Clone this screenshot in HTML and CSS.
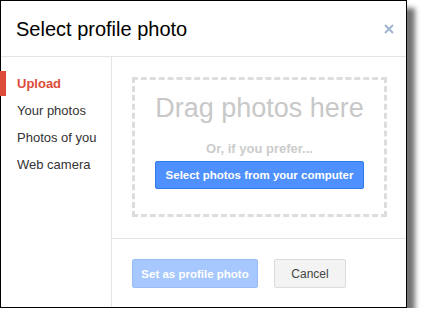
FILE: index.html
```html
<!doctype html>
<html lang="en">
  <head>
    <meta charset="UTF-8" />
    <meta name="viewport" content="width=device-width, initial-scale=1.0" />
    <title>Select profile photo</title>
    <link rel="stylesheet" href="styles.css">
  </head>
  <body>
    <div class="dialog">
      <div class="dialog-header">
        <h1 class="dialog-title">Select profile photo</h1>
        <span class="close" title="Close">
          <svg width="10" height="10" viewBox="0 0 10 10">
            <path d="M1 1 L9 9 M9 1 L1 9" stroke="#a0b4cf" stroke-width="2" fill="none" />
          </svg>
        </span>
      </div>

      <div class="dialog-body">
        <ul class="nav">
          <li class="nav-item active">Upload</li>
          <li class="nav-item">Your photos</li>
          <li class="nav-item">Photos of you</li>
          <li class="nav-item">Web camera</li>
        </ul>

        <div class="main">
          <div class="upload-area">
            <div class="dropzone">
              <div class="drag-text">Drag photos here</div>
              <div class="or-text">Or, if you prefer...</div>
              <button class="btn btn-blue">Select photos from your computer</button>
            </div>
          </div>

          <div class="footer">
            <button class="btn btn-blue disabled">Set as profile photo</button>
            <button class="btn btn-plain">Cancel</button>
          </div>
        </div>
      </div>
    </div>
  </body>
</html>
```

FILE: styles.css
```css
body {
  margin: 0;
  background: #fff;
  font-family: "Liberation Sans", Arial, sans-serif;
}
.dialog {
  width: 405px;
  height: 306px;
  background: #fff;
  border: 1px solid #000;
  box-shadow: 8px 8px 5px rgba(0, 0, 0, 0.55);
  display: flex;
  flex-direction: column;
}
.dialog-header {
  height: 55px;
  border-bottom: 1px solid #e5e5e5;
  display: flex;
  align-items: center;
  justify-content: space-between;
  padding: 0 12px 0 15px;
}
.dialog-title {
  margin: 0;
  font-size: 20px;
  font-weight: normal;
  line-height: 23px;
  color: #000;
  padding-top: 1px;
}
.close {
  display: flex;
  width: 10px;
  height: 10px;
  margin-top: 1px;
}
.dialog-body {
  flex: 1;
  display: flex;
}
.nav {
  list-style: none;
  margin: 0 0 0 -1px;
  padding: 14px 0 0;
  width: 111px;
  border-right: 1px solid #e5e5e5;
}
.nav-item {
  height: 25px;
  line-height: 25px;
  margin-bottom: 2px;
  padding-left: 17px;
  font-size: 13px;
  color: #333;
}
.nav-item.active {
  color: #dd4b39;
  font-weight: bold;
  box-shadow: inset 6px 0 #dd4b39;
}
.main {
  flex: 1;
  display: flex;
  flex-direction: column;
}
.upload-area {
  padding: 20px 0 0 20px;
  height: 161px;
}
.dropzone {
  width: 249px;
  height: 134px;
  border: 3px dashed #ddd;
  display: flex;
  flex-direction: column;
  align-items: center;
}
.drag-text {
  margin-top: 12px;
  font-size: 27px;
  line-height: 32px;
  color: #c8c8c8;
}
.or-text {
  margin-top: 17px;
  font-size: 13px;
  line-height: 16px;
  font-weight: bold;
  color: #ccc;
}
.btn {
  font-family: "Liberation Sans", Arial, sans-serif;
  font-size: 11.5px;
  font-weight: bold;
  border-radius: 2px;
  padding: 0;
  cursor: pointer;
}
.btn-blue {
  margin-top: 4px;
  width: 209px;
  height: 28px;
  background: #4d90fe;
  border: 1px solid #3079ed;
  color: #fff;
}
.footer {
  flex: 1;
  border-top: 1px solid #e5e5e5;
  padding: 20px 0 0 20px;
  display: flex;
  align-items: flex-start;
  gap: 16px;
}
.footer .btn-blue {
  margin-top: 0;
  width: 126px;
  height: 29px;
}
.btn-blue.disabled {
  background: #a6c8fe;
  border-color: #98bdf6;
  cursor: default;
}
.btn-plain {
  width: 72px;
  height: 29px;
  background: #f3f3f3;
  border: 1px solid #dcdcdc;
  color: #444;
  font-size: 12px;
  font-weight: normal;
}
```
